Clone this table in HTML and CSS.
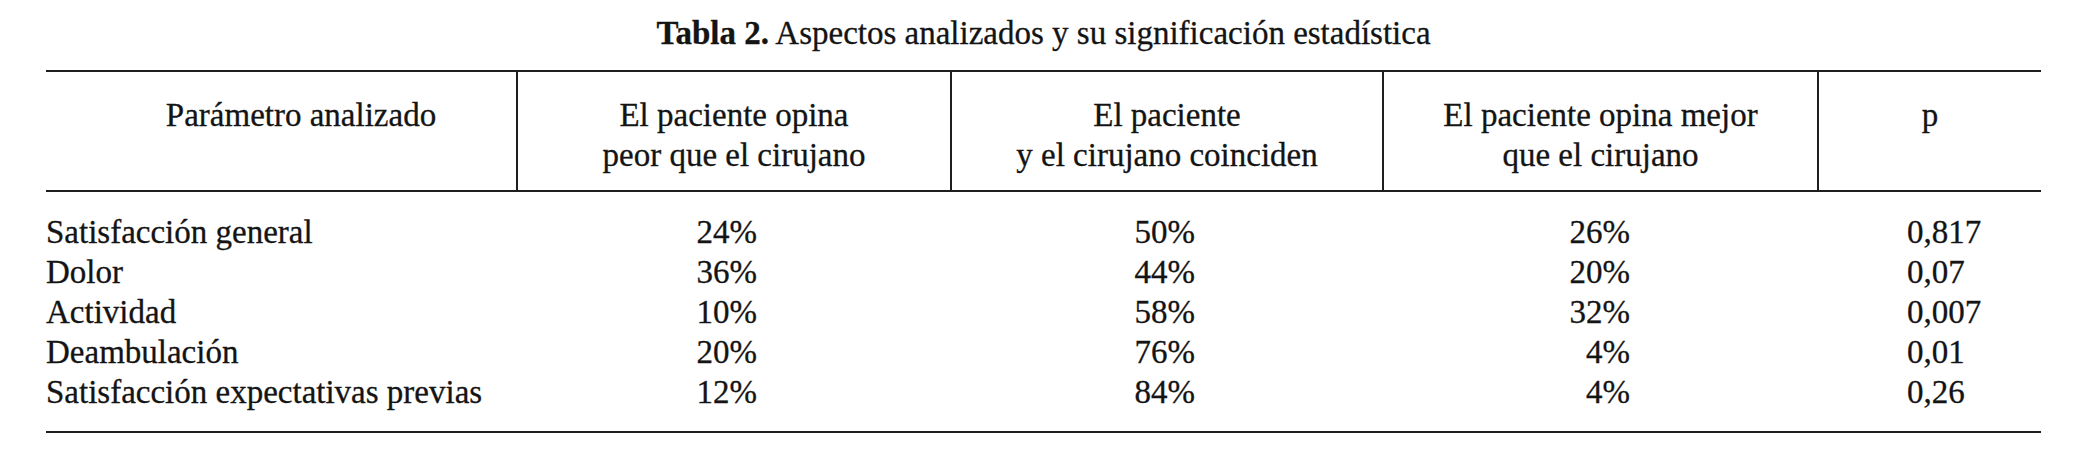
FILE: index.html
```html
<!DOCTYPE html>
<html lang="es">
<head>
  <meta charset="UTF-8" />
  <title>Tabla 2 - Aspectos analizados</title>
  <link rel="stylesheet" href="styles.css">
</head>
<body>
  <div class="page">
    <p class="caption"><b>Tabla 2.</b> Aspectos analizados y su significación estadística</p>

    <table class="stats">
      <colgroup>
        <col class="c-param">
        <col class="c-val">
        <col class="c-val2">
        <col class="c-val3">
        <col class="c-p">
      </colgroup>
      <thead>
        <tr>
          <th class="first">Parámetro analizado</th>
          <th>El paciente opina<br>peor que el cirujano</th>
          <th>El paciente<br>y el cirujano coinciden</th>
          <th>El paciente opina mejor<br>que el cirujano</th>
          <th>p</th>
        </tr>
      </thead>
      <tbody>
        <tr>
          <td>Satisfacción general</td>
          <td class="num n1">24%</td>
          <td class="num">50%</td>
          <td class="num">26%</td>
          <td class="pval">0,817</td>
        </tr>
        <tr>
          <td>Dolor</td>
          <td class="num n1">36%</td>
          <td class="num">44%</td>
          <td class="num">20%</td>
          <td class="pval">0,07</td>
        </tr>
        <tr>
          <td>Actividad</td>
          <td class="num n1">10%</td>
          <td class="num">58%</td>
          <td class="num">32%</td>
          <td class="pval">0,007</td>
        </tr>
        <tr>
          <td>Deambulación</td>
          <td class="num n1">20%</td>
          <td class="num">76%</td>
          <td class="num">4%</td>
          <td class="pval">0,01</td>
        </tr>
        <tr>
          <td>Satisfacción expectativas previas</td>
          <td class="num n1">12%</td>
          <td class="num">84%</td>
          <td class="num">4%</td>
          <td class="pval">0,26</td>
        </tr>
      </tbody>
    </table>
  </div>
</body>
</html>
```

FILE: styles.css
```css
body {
  margin: 0;
  background-color: #ffffff;
  color: #141414;
  font-family: "Liberation Serif", "Times New Roman", serif;
  font-size: 33px;
  line-height: 40px;
  -webkit-text-stroke: 0.3px #141414;
}

.page {
  width: 1995px;
  padding-left: 46px;
}

.caption {
  margin: 13px 0 17px 0;
  text-align: center;
}

.caption b {
  font-weight: bold;
}

/* Tabla */
.stats {
  width: 1995px;
  table-layout: fixed;
  border-collapse: collapse;
}

.c-param { width: 471px; }
.c-val { width: 434px; }
.c-val2 { width: 432px; }
.c-val3 { width: 435px; }
.c-p { width: 223px; }

th, td {
  padding: 0;
  font-weight: normal;
  white-space: nowrap;
}

thead tr {
  border-top: 2px solid #1e1e1e;
  border-bottom: 2px solid #1e1e1e;
}

th {
  text-align: center;
  vertical-align: top;
  padding-top: 23px;
  padding-bottom: 15px;
  border-left: 2px solid #1e1e1e;
}

th.first {
  border-left: none;
  padding-left: 40px;
}

td {
  text-align: left;
}

.num {
  text-align: right;
  padding-right: 188px;
}

.num.n1 {
  padding-right: 194px;
}

.pval {
  padding-left: 89px;
}

tbody tr:first-child td {
  padding-top: 20px;
}

tbody tr:last-child td {
  padding-bottom: 19px;
  border-bottom: 2px solid #1e1e1e;
}
```
